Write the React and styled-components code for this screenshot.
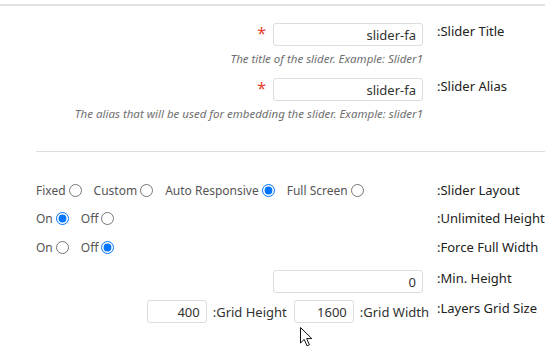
import styled, { createGlobalStyle } from "styled-components";

const GlobalStyle = createGlobalStyle`
  body {
    margin: 0;
    background: #fff;
    font-family: "Noto Sans", "Open Sans", sans-serif;
    color: #333;
  }
`;

function Radio({ label, checked, name }) {
  return (
    <RadioItem>
      {label}
      <RadioInput type="radio" name={name} defaultChecked={checked} />
    </RadioItem>
  );
}

function App() {
  return (
    <>
      <GlobalStyle />
      <Page>
        <Section>
          <Row>
            <FieldCell>
              <Required>*</Required>
              <TextInput defaultValue="slider-fa" />
            </FieldCell>
            <Label>:Slider Title</Label>
          </Row>
          <Hint>The title of the slider. Example: Slider1</Hint>
          <Row $top={12}>
            <FieldCell>
              <Required>*</Required>
              <TextInput defaultValue="slider-fa" />
            </FieldCell>
            <Label>:Slider Alias</Label>
          </Row>
          <Hint>The alias that will be used for embedding the slider. Example: slider1</Hint>
        </Section>

        <Divider />

        <Section>
          <Row $top={0}>
            <RadioGroup>
              <Radio name="layout" label="Fixed" />
              <Radio name="layout" label="Custom" />
              <Radio name="layout" label="Auto Responsive" checked />
              <Radio name="layout" label="Full Screen" />
            </RadioGroup>
            <Label $center>:Slider Layout</Label>
          </Row>
          <Row $top={8}>
            <RadioGroup>
              <Radio name="unlimited" label="On" checked />
              <Radio name="unlimited" label="Off" />
            </RadioGroup>
            <Label $center>:Unlimited Height</Label>
          </Row>
          <Row $top={9}>
            <RadioGroup>
              <Radio name="fullwidth" label="On" />
              <Radio name="fullwidth" label="Off" checked />
            </RadioGroup>
            <Label $center>:Force Full Width</Label>
          </Row>
          <Row $top={13}>
            <FieldCell>
              <TextInput defaultValue="0" />
            </FieldCell>
            <Label>:Min. Height</Label>
          </Row>
          <Row $top={7}>
            <FieldCell $overhang={7}>
              <SmallInput defaultValue="400" />
              <InlineLabel>:Grid Height</InlineLabel>
              <SmallInput defaultValue="1600" />
              <InlineLabel>:Grid Width</InlineLabel>
            </FieldCell>
            <Label>:Layers Grid Size</Label>
          </Row>
        </Section>

        <Cursor width="13" height="20" viewBox="0 0 13 20">
          <path
            d="M0.5 0.5 L0.5 16 L4.2 12.4 L7 18.8 L9.4 17.8 L6.7 11.6 L11.8 11.6 Z"
            fill="#fff"
            stroke="#111"
            strokeWidth="1"
            strokeLinejoin="round"
          />
        </Cursor>
      </Page>
    </>
  );
}

const Page = styled.div`
  position: relative;
  width: 545px;
  height: 353px;
  overflow: hidden;
  padding-top: 4px;
  box-sizing: border-box;

  &::before {
    content: "";
    display: block;
    height: 2px;
    background: #e2e2e2;
  }
`;

const Section = styled.div`
  padding-left: 36px;
`;

const Row = styled.div`
  display: grid;
  grid-template-columns: 387px auto;
  column-gap: 14px;
  margin-top: ${({ $top }) => ($top ?? 17)}px;
`;

const FieldCell = styled.div`
  display: flex;
  justify-content: flex-end;
  align-items: center;
  gap: 6px;
  margin-right: ${({ $overhang }) => -($overhang || 0)}px;
`;

const Required = styled.span`
  color: #e8412c;
  font-size: 16px;
  line-height: 1;
  align-self: flex-start;
  margin-top: 2px;
  margin-right: 1px;
`;

const TextInput = styled.input`
  width: 150px;
  height: 23px;
  box-sizing: border-box;
  border: 1px solid #dcdcdc;
  border-radius: 3px;
  padding: 0 6px;
  text-align: right;
  font-family: inherit;
  font-size: 13px;
  color: #333;
  outline: none;
`;

const SmallInput = styled(TextInput)`
  width: 60px;
`;

const InlineLabel = styled.span`
  font-size: 13px;
  color: #333;
  white-space: nowrap;
  margin-right: 1px;
`;

const Label = styled.div`
  font-size: 13px;
  line-height: 18px;
  white-space: nowrap;
  color: #222;
  align-self: ${({ $center }) => ($center ? "center" : "start")};
  margin-top: ${({ $center }) => ($center ? "0" : "-1px")};
`;

const Hint = styled.div`
  width: 387px;
  text-align: right;
  font-size: 11.5px;
  font-style: italic;
  color: #6f6f6f;
  margin-top: 5px;
  line-height: 15px;
`;

const Divider = styled.hr`
  margin: 30px 0 28px 36px;
  border: 0;
  border-top: 1px solid #dedede;
`;

const RadioGroup = styled.div`
  display: flex;
  align-items: center;
  gap: 10px;
  height: 20px;
`;

const RadioItem = styled.label`
  display: inline-flex;
  align-items: center;
  font-size: 12px;
  color: #555;
  white-space: nowrap;
  margin-right: 2px;
`;

const RadioInput = styled.input`
  width: 13px;
  height: 13px;
  margin: 0 0 0 3px;
`;

const Cursor = styled.svg`
  position: absolute;
  left: 300px;
  top: 327px;
`;

export default App;
